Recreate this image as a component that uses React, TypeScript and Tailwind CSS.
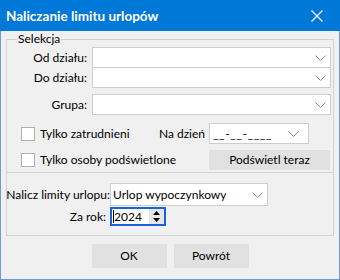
import React from "react";

const Chevron = () => (
  <svg width="11" height="6" viewBox="0 0 11 6" className="shrink-0">
    <polyline points="0.5,0.5 5.5,5.5 10.5,0.5" fill="none" stroke="#8c8c8c" strokeWidth="1" />
  </svg>
);

const Combo = ({ className = "", text = "" }: { className?: string; text?: string }) => (
  <div className={`flex items-center justify-between bg-white border border-[#cdcdcd] pl-[2px] pr-[4px] ${className}`}>
    <span className="text-black truncate">{text}</span>
    <Chevron />
  </div>
);

const Check = ({ label }: { label: string }) => (
  <div className="flex items-center ml-[14px]">
    <div className="w-[14px] h-[14px] border border-[#b0b0b0] bg-white" />
    <span className="ml-[5px] whitespace-nowrap">{label}</span>
  </div>
);

export default function App() {
  return (
    <div
      className="w-[340px] h-[280px] flex flex-col text-[12px] leading-[14px] text-black bg-[#f0f0f0]"
      style={{ fontFamily: 'Lato, "Liberation Sans", Arial, sans-serif' }}
    >
      {/* Title bar */}
      <div className="h-[31px] bg-[#0078d7] flex items-center justify-between pl-[6px] pr-[17px] shrink-0">
        <span className="text-white font-bold text-[13.5px]">Naliczanie limitu urlopów</span>
        <svg width="12" height="12" viewBox="0 0 12 12">
          <path d="M0.5 0.5 L11.5 11.5 M11.5 0.5 L0.5 11.5" stroke="#fff" strokeWidth="1.2" />
        </svg>
      </div>

      {/* Body */}
      <div className="flex-1 flex flex-col border-x border-b border-[#6c9bd6] px-[5px]">
        <fieldset className="mt-px border border-[#d3d3d3] pr-[1px] pb-[2px]">
          <legend className="ml-[10px] px-px leading-[14px]">Selekcja</legend>

          <div className="flex items-center pt-px">
            <div className="w-[85px] pr-[5px] text-right">Od działu:</div>
            <Combo className="w-[239px] h-[21px]" />
          </div>
          <div className="flex items-center -mt-px">
            <div className="w-[85px] pr-[5px] text-right">Do działu:</div>
            <Combo className="w-[239px] h-[21px]" />
          </div>
          <div className="flex items-center mt-[6px]">
            <div className="w-[85px] pr-[5px] text-right">Grupa:</div>
            <Combo className="w-[239px] h-[21px]" />
          </div>

          <div className="flex items-center mt-[8px]">
            <div className="w-[202px] flex items-center justify-between pr-[4px]">
              <Check label="Tylko zatrudnieni" />
              <span>Na dzień</span>
            </div>
            <div className="w-[100px] h-[21px] bg-white border border-[#cdcdcd] flex items-center justify-between pl-[3px] pr-[9px]">
              <span className="tracking-[0.6px]">__-__-____</span>
              <Chevron />
            </div>
          </div>

          <div className="flex items-center mt-[6px]">
            <div className="w-[202px]">
              <Check label="Tylko osoby podświetlone" />
            </div>
            <div className="w-[121px] h-[20px] bg-[#e1e1e1] flex items-center justify-center">
              Podświetl teraz
            </div>
          </div>
        </fieldset>

        <div className="border border-t-0 border-[#d3d3d3] pt-[10px] pb-[9px]">
          <div className="flex items-center">
            <div className="w-[103px] flex justify-end whitespace-nowrap">Nalicz limity urlopu:</div>
            <Combo className="w-[158px] h-[23px]" text="Urlop wypoczynkowy" />
          </div>
          <div className="flex items-center mt-px">
            <div className="w-[103px] pr-[4px] text-right">Za rok:</div>
            <div className="w-[56px] h-[19px] border-2 border-[#1a63d6] bg-white flex items-center justify-between">
              <span className="flex items-center pl-px">
                <span className="w-px h-[13px] bg-black" />
                <span>2024</span>
              </span>
              <span className="w-[15px] h-full bg-[#e6e6e6] flex flex-col items-center justify-center gap-[3px]">
                <svg width="7" height="4" viewBox="0 0 7 4">
                  <polygon points="0,4 3.5,0 7,4" fill="#000" />
                </svg>
                <svg width="7" height="4" viewBox="0 0 7 4">
                  <polygon points="0,0 7,0 3.5,4" fill="#000" />
                </svg>
              </span>
            </div>
          </div>
        </div>

        <div className="flex justify-center gap-[7px] mt-[8px]">
          <div className="w-[75px] h-[24px] bg-[#e1e1e1] flex items-center justify-center">OK</div>
          <div className="w-[75px] h-[24px] bg-[#e1e1e1] flex items-center justify-center">Powrót</div>
        </div>
      </div>
    </div>
  );
}
